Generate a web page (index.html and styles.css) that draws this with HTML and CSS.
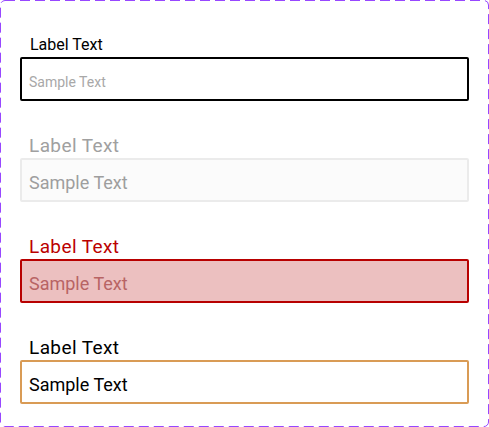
FILE: index.html
```html
<!DOCTYPE html>
<html>
<head>
<meta charset="utf-8">
<link rel="stylesheet" href="styles.css">
</head>
<body>
<div class="frame">
  <div class="field field-small">
    <div class="label">Label Text</div>
    <div class="box box-default"><span class="value">Sample Text</span></div>
  </div>
  <div class="field field-disabled">
    <div class="label">Label Text</div>
    <div class="box box-disabled"><span class="value">Sample Text</span></div>
  </div>
  <div class="field field-error">
    <div class="label">Label Text</div>
    <div class="box box-error"><span class="value">Sample Text</span></div>
  </div>
  <div class="field field-filled">
    <div class="label">Label Text</div>
    <div class="box box-focus"><span class="value">Sample Text</span></div>
  </div>
</div>
</body>
</html>
```
FILE: styles.css
```css
* { box-sizing: border-box; }
html, body { margin: 0; padding: 0; background: #ffffff; }
body { font-family: Roboto, "Noto Sans", sans-serif; }

.frame {
  width: 489px;
  height: 427px;
  padding: 36px 20px 0 20px;
  display: flex;
  flex-direction: column;
  gap: 34px;
  background-image: url("data:image/svg+xml,%3Csvg xmlns='http://www.w3.org/2000/svg' width='489' height='427'%3E%3Crect x='0.5' y='0.5' width='488' height='426' rx='4.5' fill='none' stroke='%239747FF' stroke-width='1' stroke-dasharray='10 5'/%3E%3C/svg%3E");
  background-repeat: no-repeat;
}

.field { display: flex; flex-direction: column; }

.label {
  font-size: 19px;
  letter-spacing: 0.4px;
  line-height: 21px;
  margin-bottom: 2px;
  padding-left: 9px;
}

.box {
  height: 44px;
  border: 2px solid #000;
  border-radius: 2px;
  display: flex;
  align-items: center;
  padding: 5px 8px 0 7px;
  font-size: 18px;
}

.field-small .label {
  font-size: 16px;
  letter-spacing: 0;
  line-height: 18px;
  margin-bottom: 3px;
  padding-left: 10px;
  color: #000;
}
.box-default { border-color: #000; }
.box-default .value { font-size: 14px; color: #a8a8a8; }

.field-disabled .label { color: #a0a0a0; }
.box-disabled {
  border-color: #ebebeb;
  background: #fbfbfb;
  color: #9e9e9e;
}

.field-error .label { color: #bb0000; }
.box-error {
  border-color: #b80000;
  background: #ecc0c0;
  color: #b86464;
}

.field-filled .label { color: #000; }
.box-focus {
  border-color: #d99b55;
  color: #000;
}
```
